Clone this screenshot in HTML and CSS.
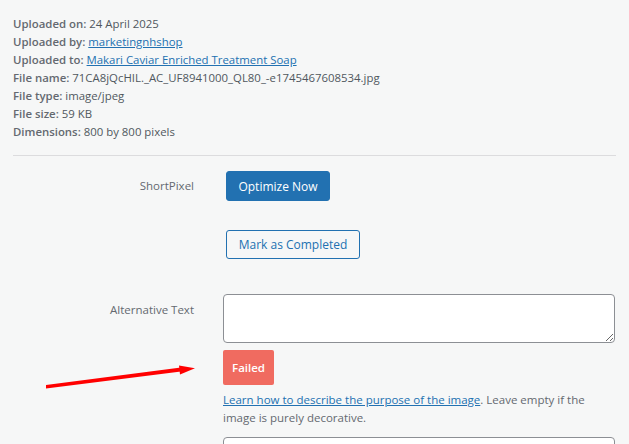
FILE: index.html
```html
<!DOCTYPE html>
<html>
<head>
<meta charset="utf-8">
<link rel="stylesheet" href="styles.css">
</head>
<body>
<div class="page">
  <div class="meta">
    <div><strong>Uploaded on:</strong> 24 April 2025</div>
    <div><strong>Uploaded by:</strong> <a href="#">marketingnhshop</a></div>
    <div><strong>Uploaded to:</strong> <a href="#">Makari Caviar Enriched Treatment Soap</a></div>
    <div><strong>File name:</strong> 71CA8jQcHIL._AC_UF8941000_QL80_-e1745467608534.jpg</div>
    <div><strong>File type:</strong> image/jpeg</div>
    <div><strong>File size:</strong> 59 KB</div>
    <div><strong>Dimensions:</strong> 800 by 800 pixels</div>
  </div>
  <hr class="divider">
  <div class="settings">
    <div class="label label-sp">ShortPixel</div>
    <div class="field field-sp">
      <button class="btn btn-primary">Optimize Now</button>
      <button class="btn btn-secondary">Mark as Completed</button>
    </div>
    <div class="label label-alt">Alternative Text</div>
    <div class="field">
      <textarea class="textarea"></textarea>
      <div class="failed">Failed</div>
      <p class="desc"><a href="#">Learn how to describe the purpose of the image</a>. Leave empty if the image is purely decorative.</p>
      <div class="input"></div>
    </div>
  </div>
  <svg class="arrow" width="629" height="444" viewBox="0 0 629 444">
    <polygon points="46,385 181,367.5 181,371.5 46,388.5" fill="#ff0000"/>
    <polygon points="179,365.5 195,368.3 180,374.5" fill="#ff0000"/>
  </svg>
</div>
</body>
</html>
```
FILE: styles.css
```css
html, body {
  margin: 0;
  padding: 0;
  background: #f6f7f7;
}
.page {
  position: relative;
  width: 629px;
  height: 444px;
  overflow: hidden;
  font-family: "Open Sans", "Noto Sans", sans-serif;
  font-size: 11.4px;
  color: #50575e;
}
.meta {
  padding: 15px 0 0 13px;
  line-height: 18px;
}
.meta strong {
  font-weight: 600;
  color: #646970;
}
.meta a, .desc a {
  color: #2271b1;
  text-decoration: underline;
}
.divider {
  margin: 14px 13px 0 13px;
  border: 0;
  border-top: 1px solid #dcdcde;
  height: 0;
}
.settings {
  display: grid;
  grid-template-columns: 181px 392px;
  column-gap: 29px;
  padding: 15px 0 0 13px;
}
.label {
  text-align: right;
  color: #646970;
  font-size: 11.5px;
  line-height: 18px;
}
.label-sp {
  padding-top: 6px;
}
.label-alt {
  padding-top: 7px;
}
.field-sp {
  display: flex;
  flex-direction: column;
  align-items: flex-start;
  padding-left: 3px;
  padding-bottom: 35px;
}
.btn {
  font-family: inherit;
  font-size: 12px;
  border-radius: 3px;
  padding: 0;
  white-space: nowrap;
  text-align: center;
  cursor: pointer;
}
.btn-primary {
  height: 30px;
  width: 104px;
  background: #2271b1;
  border: 1px solid #2271b1;
  color: #fff;
}
.btn-secondary {
  margin-top: 29px;
  height: 29px;
  width: 134px;
  background: #f6f7f7;
  border: 1px solid #2271b1;
  color: #2271b1;
}
.textarea {
  display: block;
  box-sizing: border-box;
  width: 392px;
  height: 49px;
  margin: 0;
  border: 1px solid #8c8f94;
  border-radius: 4px;
  background: #fff;
}
.failed {
  margin-top: 7px;
  width: 51px;
  height: 35px;
  line-height: 35px;
  text-align: center;
  background: #f06b60;
  color: #fff;
  font-weight: 600;
  font-size: 11.5px;
  border-radius: 2px;
}
.desc {
  margin: 6px 0 0 0;
  font-size: 11.5px;
  line-height: 18px;
  color: #646970;
}
.input {
  margin-top: 10px;
  box-sizing: border-box;
  width: 392px;
  height: 30px;
  border: 1px solid #8c8f94;
  border-radius: 4px;
  background: #fff;
}
.arrow {
  position: absolute;
  left: 0;
  top: 0;
  pointer-events: none;
}
```
